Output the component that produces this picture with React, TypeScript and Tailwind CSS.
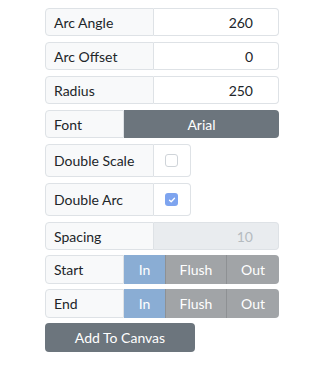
import React, { useState } from 'react'

function LabelCell({ text, w }: { text: string; w: string }) {
  return (
    <div className={`flex ${w} shrink-0 items-center rounded-l-[4px] border border-[#dee2e6] bg-[#f8f9fa] px-[8px] text-[14px] text-[#212529]`}>
      {text}
    </div>
  )
}

function NumberRow({ label, value, disabled }: { label: string; value: string; disabled?: boolean }) {
  return (
    <div className="flex h-[28px] w-[234px]">
      <LabelCell text={label} w="w-[109px]" />
      <div
        className={`flex flex-1 items-center justify-end rounded-r-[4px] border border-l-0 border-[#dee2e6] pr-[25px] text-[14px] ${
          disabled ? 'bg-[#e9ecef] text-[#b5bbc0]' : 'bg-white text-[#212529]'
        }`}
      >
        {value}
      </div>
    </div>
  )
}

function CheckRow({ label, checked }: { label: string; checked: boolean }) {
  return (
    <div className="flex h-[33px] w-[146px]">
      <LabelCell text={label} w="w-[109px]" />
      <div className="flex flex-1 items-center justify-center rounded-r-[4px] border border-l-0 border-[#dee2e6] bg-white pr-[1px]">
        {checked ? (
          <div className="grid h-[13px] w-[13px] place-items-center rounded-[3px] bg-[#7ea4ef]">
            <svg width="8" height="8" viewBox="0 0 8 8" fill="none">
              <path d="M1.5 4.2 L3.2 5.8 L6.5 2.3" stroke="white" strokeWidth="1.3" strokeLinecap="round" strokeLinejoin="round" />
            </svg>
          </div>
        ) : (
          <div className="h-[13px] w-[13px] rounded-[3px] border border-[#cfd4d9] bg-white" />
        )}
      </div>
    </div>
  )
}

function SegmentRow({ label }: { label: string }) {
  const [active] = useState('In')
  const opts = [
    { name: 'In', w: 'w-[41px]' },
    { name: 'Flush', w: 'w-[61px]' },
    { name: 'Out', w: 'flex-1' },
  ]
  return (
    <div className="flex h-[29px] w-[234px]">
      <LabelCell text={label} w="w-[79px]" />
      <div className="flex flex-1 overflow-hidden rounded-r-[4px]">
        {opts.map((o, i) => (
          <div
            key={o.name}
            className={`flex ${o.w} items-center justify-center text-[14px] text-white ${
              active === o.name ? 'bg-[#8aadd4]' : 'bg-[#a1a4a7]'
            } ${i > 0 ? 'border-l border-[#8e9194]' : ''}`}
          >
            {o.name}
          </div>
        ))}
      </div>
    </div>
  )
}

export default function App() {
  return (
    <div className="min-h-[365px] w-[324px] bg-white font-['Lato','Noto_Sans',sans-serif]">
      <div className="flex flex-col pl-[45px] pt-[8px]">
        <div className="flex flex-col gap-[6px]">
          <NumberRow label="Arc Angle" value="260" />
          <NumberRow label="Arc Offset" value="0" />
          <NumberRow label="Radius" value="250" />
          <div className="flex h-[28px] w-[234px]">
            <LabelCell text="Font" w="w-[79px]" />
            <div className="flex flex-1 items-center justify-center rounded-r-[4px] bg-[#6c757d] text-[14px] text-white">
              Arial
            </div>
          </div>
        </div>
        <div className="mt-[6px] flex flex-col gap-[6px]">
          <CheckRow label="Double Scale" checked={false} />
          <CheckRow label="Double Arc" checked={true} />
        </div>
        <div className="mt-[6px] flex flex-col gap-[5px]">
          <NumberRow label="Spacing" value="10" disabled />
          <SegmentRow label="Start" />
          <SegmentRow label="End" />
          <button className="flex h-[29px] w-[150px] items-center justify-center rounded-[4px] bg-[#6c757d] text-[14px] text-white">
            Add To Canvas
          </button>
        </div>
      </div>
    </div>
  )
}
